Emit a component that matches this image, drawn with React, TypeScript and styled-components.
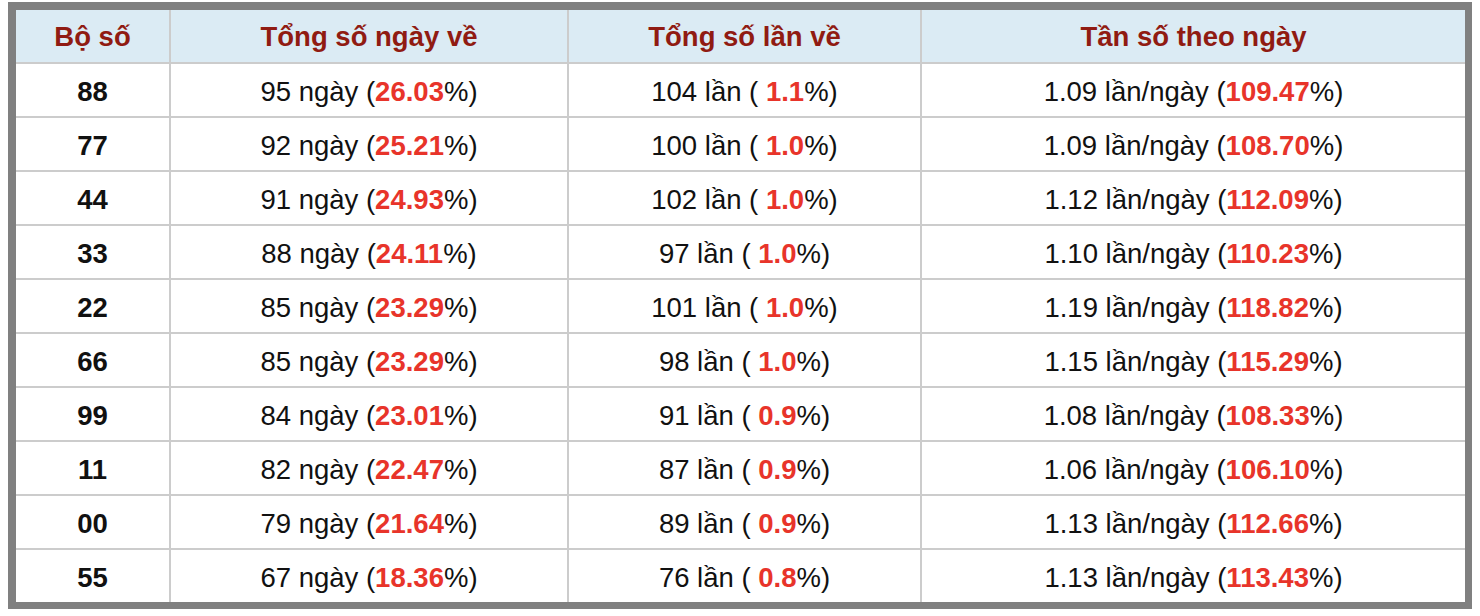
import styled, { createGlobalStyle } from "styled-components";

const GlobalStyle = createGlobalStyle`
  html, body {
    margin: 0;
    padding: 0;
    background: #ffffff;
  }
  body {
    padding: 2px 6px 0 8px;
    font-family: "Liberation Sans", Arial, Helvetica, sans-serif;
  }
`;

const Table = styled.table`
  border-collapse: collapse;
  border: 8px solid #808080;
  border-right-width: 7px;
  border-bottom-width: 7px;
  table-layout: fixed;
`;

const HeadCell = styled.th<{ $w: number }>`
  width: ${(p) => p.$w}px;
  height: 50px;
  padding: 2px 0 0;
  line-height: 1.1;
  background: #dbebf4;
  color: #901b12;
  font-size: 27.5px;
  font-weight: 700;
  text-align: center;
  border: 2px solid #cccccc;
  border-top: none;
`;

const Cell = styled.td<{ $bold?: boolean }>`
  height: 48px;
  padding: 4px 0 0;
  line-height: 1.1;
  text-align: center;
  color: #111111;
  font-size: 27.5px;
  font-weight: ${(p) => (p.$bold ? 700 : 400)};
  border: 2px solid #cccccc;
`;

const Hot = styled.b`
  color: #e8342a;
  font-weight: 700;
`;

type Row = [string, string, string, string, string, string, string];

const rows: Row[] = [
  ["88", "95", "26.03", "104", "1.1", "1.09", "109.47"],
  ["77", "92", "25.21", "100", "1.0", "1.09", "108.70"],
  ["44", "91", "24.93", "102", "1.0", "1.12", "112.09"],
  ["33", "88", "24.11", "97", "1.0", "1.10", "110.23"],
  ["22", "85", "23.29", "101", "1.0", "1.19", "118.82"],
  ["66", "85", "23.29", "98", "1.0", "1.15", "115.29"],
  ["99", "84", "23.01", "91", "0.9", "1.08", "108.33"],
  ["11", "82", "22.47", "87", "0.9", "1.06", "106.10"],
  ["00", "79", "21.64", "89", "0.9", "1.13", "112.66"],
  ["55", "67", "18.36", "76", "0.8", "1.13", "113.43"],
];

export default function App() {
  return (
    <>
      <GlobalStyle />
      <Table>
        <thead>
          <tr>
            <HeadCell $w={153}>Bộ số</HeadCell>
            <HeadCell $w={396}>Tổng số ngày về</HeadCell>
            <HeadCell $w={351}>Tổng số lần về</HeadCell>
            <HeadCell $w={543}>Tần số theo ngày</HeadCell>
          </tr>
        </thead>
        <tbody>
          {rows.map(([bo, days, dayPct, times, timePct, freq, freqPct]) => (
            <tr key={bo}>
              <Cell $bold>{bo}</Cell>
              <Cell>
                {days} ngày (<Hot>{dayPct}</Hot>%)
              </Cell>
              <Cell>
                {times} lần ( <Hot>{timePct}</Hot>%)
              </Cell>
              <Cell>
                {freq} lần/ngày (<Hot>{freqPct}</Hot>%)
              </Cell>
            </tr>
          ))}
        </tbody>
      </Table>
    </>
  );
}
